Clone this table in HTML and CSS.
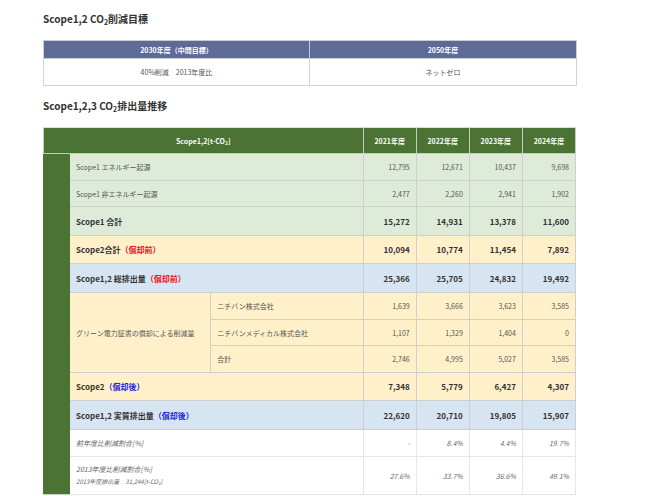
FILE: index.html
```html
<!DOCTYPE html>
<html lang="ja">
<head>
<meta charset="utf-8">
<link rel="stylesheet" href="styles.css">
</head>
<body>
<div class="page">
  <h2 class="heading h-first">Scope1,2 CO<sub>2</sub>削減目標</h2>
  <table class="target">
    <colgroup><col class="t-c1"><col class="t-c2"></colgroup>
    <thead>
      <tr><th>2030年度（中間目標）</th><th>2050年度</th></tr>
    </thead>
    <tbody>
      <tr><td>40%削減　2013年度比</td><td>ネットゼロ</td></tr>
    </tbody>
  </table>

  <h2 class="heading h-second">Scope1,2,3 CO<sub>2</sub>排出量推移</h2>
  <table class="emis">
    <colgroup>
      <col class="c-side"><col class="c-lab1"><col class="c-lab2">
      <col class="c-y"><col class="c-y"><col class="c-y"><col class="c-y">
    </colgroup>
    <thead>
      <tr class="r-head">
        <th colspan="3">Scope1,2[t-CO<sub>2</sub>]</th>
        <th>2021年度</th><th>2022年度</th><th>2023年度</th><th>2024年度</th>
      </tr>
    </thead>
    <tbody>
      <tr class="green r27">
        <td class="side" rowspan="12"></td>
        <td class="lab" colspan="2">Scope1 エネルギー起源</td>
        <td class="num">12,795</td><td class="num">12,671</td><td class="num">10,437</td><td class="num">9,698</td>
      </tr>
      <tr class="green r26">
        <td class="lab" colspan="2">Scope1 非エネルギー起源</td>
        <td class="num">2,477</td><td class="num">2,260</td><td class="num">2,941</td><td class="num">1,902</td>
      </tr>
      <tr class="green bold r29">
        <td class="lab" colspan="2">Scope1 合計</td>
        <td class="num">15,272</td><td class="num">14,931</td><td class="num">13,378</td><td class="num">11,600</td>
      </tr>
      <tr class="cream bold r28">
        <td class="lab" colspan="2">Scope2合計<span class="red">（償却前）</span></td>
        <td class="num">10,094</td><td class="num">10,774</td><td class="num">11,454</td><td class="num">7,892</td>
      </tr>
      <tr class="blue bold r29">
        <td class="lab" colspan="2">Scope1,2 総排出量<span class="red">（償却前）</span></td>
        <td class="num">25,366</td><td class="num">25,705</td><td class="num">24,832</td><td class="num">19,492</td>
      </tr>
      <tr class="cream r27">
        <td class="lab" rowspan="3">グリーン電力証書の償却による削減量</td>
        <td class="lab">ニチバン株式会社</td>
        <td class="num">1,639</td><td class="num">3,666</td><td class="num">3,623</td><td class="num">3,585</td>
      </tr>
      <tr class="cream r26">
        <td class="lab">ニチバンメディカル株式会社</td>
        <td class="num">1,107</td><td class="num">1,329</td><td class="num">1,404</td><td class="num">0</td>
      </tr>
      <tr class="cream r27">
        <td class="lab">合計</td>
        <td class="num">2,746</td><td class="num">4,995</td><td class="num">5,027</td><td class="num">3,585</td>
      </tr>
      <tr class="cream bold r28">
        <td class="lab" colspan="2">Scope2<span class="blue-t">（償却後）</span></td>
        <td class="num">7,348</td><td class="num">5,779</td><td class="num">6,427</td><td class="num">4,307</td>
      </tr>
      <tr class="blue bold r29">
        <td class="lab" colspan="2">Scope1,2 実質排出量<span class="blue-t">（償却後）</span></td>
        <td class="num">22,620</td><td class="num">20,710</td><td class="num">19,805</td><td class="num">15,907</td>
      </tr>
      <tr class="white ital r27">
        <td class="lab" colspan="2">前年度比削減割合[%]</td>
        <td class="num">-</td><td class="num">8.4%</td><td class="num">4.4%</td><td class="num">19.7%</td>
      </tr>
      <tr class="white ital r39">
        <td class="lab" colspan="2">2013年度比削減割合[%]<br><span class="small">2013年度排出量　31,244[t-CO<sub>2</sub>]</span></td>
        <td class="num">27.6%</td><td class="num">33.7%</td><td class="num">36.6%</td><td class="num">49.1%</td>
      </tr>
    </tbody>
  </table>
</div>
</body>
</html>
```

FILE: styles.css
```css
html, body {
  margin: 0;
  padding: 0;
  background: #ffffff;
}

body {
  font-family: "Noto Sans CJK JP", "Noto Sans", sans-serif;
  color: #555555;
}

.page {
  padding-left: 43px;
  width: 533px;
}

.heading {
  font-size: 10px;
  line-height: 14px;
  font-weight: bold;
  color: #333333;
  margin: 0;
}

.heading sub {
  font-size: 7px;
  vertical-align: -2px;
  line-height: 0;
}

.h-first {
  padding-top: 12px;
  margin-bottom: 14px;
}

.h-second {
  margin-top: 13px;
  margin-bottom: 14px;
}

table {
  border-collapse: collapse;
  table-layout: fixed;
  width: 533px;
}

td, th {
  padding: 0;
}

/* target table */
.target .t-c1 { width: 266px; }
.target .t-c2 { width: 267px; }

.target th {
  background: #5e6b97;
  color: #ffffff;
  font-size: 7px;
  font-weight: bold;
  height: 17px;
  text-align: center;
  border: 1px solid #c8ccd8;
}

.target td {
  height: 26px;
  text-align: center;
  font-size: 7px;
  color: #555555;
  border: 1px solid #d4d4d4;
}

/* emissions table */
.emis .c-side { width: 26px; }
.emis .c-lab1 { width: 141px; }
.emis .c-lab2 { width: 152px; }
.emis .c-y { width: 53px; }

.emis th {
  background: #4a7334;
  color: #ffffff;
  font-size: 7px;
  font-weight: bold;
  text-align: center;
  border: 1px solid #c9c9c9;
  border-top-color: #dddddd;
}

.emis th sub {
  font-size: 5px;
  vertical-align: -1px;
  line-height: 0;
}

.r-head th { height: 25px; }

.emis td {
  border: 1px solid #cfcfcf;
  font-size: 7px;
}

.emis td.side {
  background: #4a7334;
  border-color: #4a7334;
  border-bottom-color: #cfcfcf;
}

.emis td.lab {
  text-align: left;
  padding-left: 6px;
}

.emis td.num {
  text-align: right;
  padding-right: 6px;
}

.r26 td { height: 25px; }
.r27 td { height: 26px; }
.r28 td { height: 27px; }
.r29 td { height: 28px; }
.r39 td { height: 37px; }

.green td { background: #deebd9; }
.cream td { background: #fff0c9; }
.blue td { background: #d7e5f2; }
.white td { background: #ffffff; border-color: #e6e6e6; }
.emis tr td.side { background: #4a7334; }

.bold td {
  font-weight: bold;
  font-size: 8px;
  color: #333333;
}

.ital td {
  font-style: italic;
  color: #666666;
}

.red { color: #e8141f; }
.blue-t { color: #1a25e0; }

.small {
  font-size: 6px;
  line-height: 12px;
}

.small sub {
  font-size: 4px;
  vertical-align: -1px;
  line-height: 0;
}

.emis td.lab br + .small { display: inline-block; margin-top: 2px; }
```
